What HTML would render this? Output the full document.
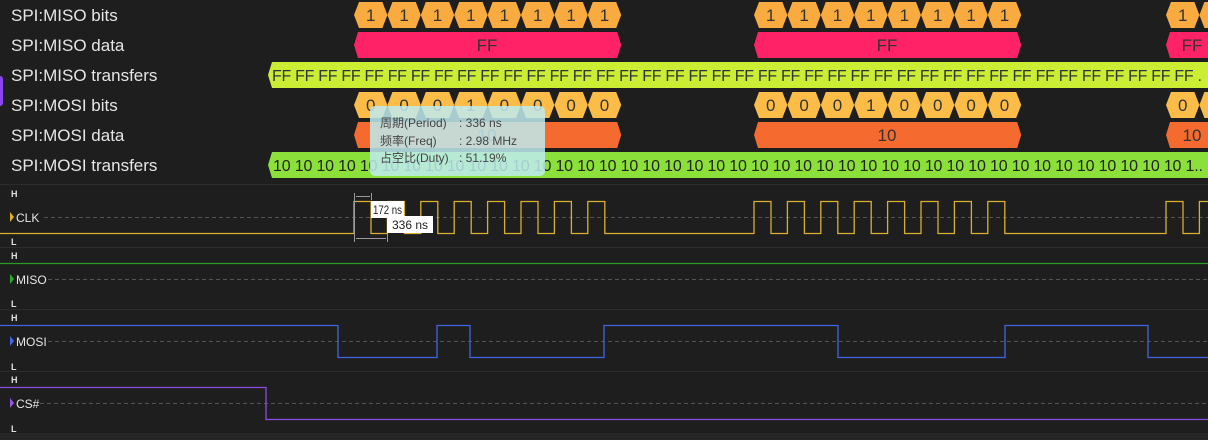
<!DOCTYPE html>
<html><head><meta charset="utf-8"><style>
html,body{margin:0;padding:0;background:#1e1e1e;width:1208px;height:440px;overflow:hidden}
svg{display:block;font-family:"Liberation Sans","Noto Sans CJK SC",sans-serif}
.lb{fill:#e6e6e6;font-size:17px}
.bt{fill:#333;font-size:17px;text-anchor:middle}
.hl{fill:#e0e0e0;font-size:9px;font-weight:bold}
.sn{fill:#e6e6e6;font-size:12px}
.tt{fill:#444;font-size:12px}
</style></head><body>
<svg id="s" width="1208" height="440" xmlns="http://www.w3.org/2000/svg">
<rect x="0" y="433" width="1208" height="7" fill="#262626"/>
<rect x="-3" y="76" width="6" height="30" rx="3" fill="#8a45f0"/>
<g id="shapes"></g>
<line x1="0" y1="184.5" x2="1208" y2="184.5" stroke="#2c2c2c"/>
<line x1="0" y1="247.5" x2="1208" y2="247.5" stroke="#2c2c2c"/>
<line x1="0" y1="309.5" x2="1208" y2="309.5" stroke="#2c2c2c"/>
<line x1="0" y1="371.5" x2="1208" y2="371.5" stroke="#2c2c2c"/>
<g stroke="#555" stroke-dasharray="4,3">
<line x1="44" y1="217.5" x2="1208" y2="217.5"/><line x1="48" y1="279.5" x2="1208" y2="279.5"/>
<line x1="48" y1="341.5" x2="1208" y2="341.5"/><line x1="40" y1="403.5" x2="1208" y2="403.5"/>
</g>
<g id="waves" fill="none" stroke-width="1.3"></g>
<text class="lb" x="11" y="21">SPI:MISO bits</text>
<text class="lb" x="11" y="51">SPI:MISO data</text>
<text class="lb" x="11" y="81">SPI:MISO transfers</text>
<text class="lb" x="11" y="111">SPI:MOSI bits</text>
<text class="lb" x="11" y="141">SPI:MOSI data</text>
<text class="lb" x="11" y="171">SPI:MOSI transfers</text>
<g class="bt">
<text x="370.7" y="21">1</text><text x="404.1" y="21">1</text><text x="437.5" y="21">1</text><text x="470.9" y="21">1</text><text x="504.3" y="21">1</text><text x="537.7" y="21">1</text><text x="571.1" y="21">1</text><text x="604.5" y="21">1</text>
<text x="770.7" y="21">1</text><text x="804.1" y="21">1</text><text x="837.5" y="21">1</text><text x="870.9" y="21">1</text><text x="904.3" y="21">1</text><text x="937.7" y="21">1</text><text x="971.1" y="21">1</text><text x="1004.5" y="21">1</text>
<text x="1182.7" y="21">1</text>
<text x="487" y="51">FF</text><text x="887" y="51">FF</text><text x="1192" y="51">FF</text>
<text x="370.7" y="111">0</text><text x="404.1" y="111">0</text><text x="437.5" y="111">0</text><text x="470.9" y="111">1</text><text x="504.3" y="111">0</text><text x="537.7" y="111">0</text><text x="571.1" y="111">0</text><text x="604.5" y="111">0</text>
<text x="770.7" y="111">0</text><text x="804.1" y="111">0</text><text x="837.5" y="111">0</text><text x="870.9" y="111">1</text><text x="904.3" y="111">0</text><text x="937.7" y="111">0</text><text x="971.1" y="111">0</text><text x="1004.5" y="111">0</text>
<text x="1182.7" y="111">0</text>
<text x="487" y="141">10</text><text x="887" y="141">10</text><text x="1192" y="141">10</text>
</g>
<text x="272" y="81" font-size="16" fill="#333" textLength="930" lengthAdjust="spacing">FF FF FF FF FF FF FF FF FF FF FF FF FF FF FF FF FF FF FF FF FF FF FF FF FF FF FF FF FF FF FF FF FF FF FF FF FF FF FF FF .</text>
<text x="273" y="171" font-size="16" fill="#222" textLength="930" lengthAdjust="spacing">10 10 10 10 10 10 10 10 10 10 10 10 10 10 10 10 10 10 10 10 10 10 10 10 10 10 10 10 10 10 10 10 10 10 10 10 10 10 10 10 10 10 1..</text>
<text class="hl" x="11" y="197">H</text><text class="hl" x="11" y="245">L</text>
<text class="hl" x="11" y="259">H</text><text class="hl" x="11" y="307">L</text>
<text class="hl" x="11" y="321">H</text><text class="hl" x="11" y="370">L</text>
<text class="hl" x="11" y="383">H</text><text class="hl" x="11" y="432">L</text>
<polygon points="10,212 14,217 10,222" fill="#e0b020"/><text class="sn" x="16" y="222">CLK</text>
<polygon points="10,274 14,279 10,284" fill="#2eaa2e"/><text class="sn" x="16" y="284">MISO</text>
<polygon points="10,336 14,341 10,346" fill="#4466ee"/><text class="sn" x="16" y="346">MOSI</text>
<polygon points="10,398 14,403 10,408" fill="#9955ee"/><text class="sn" x="16" y="408">CS#</text>
<g stroke="#999" stroke-width="1">
<line x1="354.5" y1="193" x2="354.5" y2="242"/><line x1="371.5" y1="193" x2="371.5" y2="200"/><line x1="387.5" y1="234" x2="387.5" y2="242"/>
<line x1="356" y1="196.5" x2="370" y2="196.5"/><line x1="356" y1="238.5" x2="386" y2="238.5"/>
</g>
<rect x="371" y="201" width="33" height="17" fill="#fff"/><text x="373" y="214" font-size="12" fill="#222" textLength="29" lengthAdjust="spacingAndGlyphs">172 ns</text>
<rect x="387" y="216" width="46" height="17" fill="#fff"/><text x="392" y="229" font-size="12" fill="#222">336 ns</text>
<rect x="370" y="106" width="175" height="70" rx="5" fill="rgba(190,235,240,0.85)"/>
<g class="tt"><text x="380" y="127">周期(Period)</text><text x="459" y="127">: 336 ns</text>
<text x="380" y="145">频率(Freq)</text><text x="459" y="145">: 2.98 MHz</text>
<text x="380" y="162">占空比(Duty)</text><text x="459" y="162">: 51.19%</text></g>
</svg>
<script>
var ns="http://www.w3.org/2000/svg",S=document.getElementById("shapes"),W=document.getElementById("waves");
function poly(pts,f){var p=document.createElementNS(ns,"polygon");p.setAttribute("points",pts.map(a=>a.join(",")).join(" "));p.setAttribute("fill",f);S.insertBefore(p,S.firstChild);}
function hex(x0,x1,t,b,f,i){var c=(t+b)/2;i=i||5;poly([[x0,c],[x0+i,t],[x1-i,t],[x1,c],[x1-i,b],[x0+i,b]],f);}
var G=[354,754,1166],w=33.4;
G.forEach(function(s){for(var k=0;k<8;k++){hex(s+k*w,s+(k+1)*w,2,28,"#f9ab3f");hex(s+k*w,s+(k+1)*w,92,118,"#fbbd48");}
hex(s,s+8*w,32,58,"#ff2266",4);hex(s,s+8*w,122,148,"#f56a2e",4);});
hex(268,1260,62,88,"#cbee35",4);hex(268,1260,152,178,"#8be03a",4);
function path(d,c){var p=document.createElementNS(ns,"path");p.setAttribute("d",d);p.setAttribute("stroke",c);W.appendChild(p);}
var hi=201.5,lo=233.5,d="M0 "+lo;
G.forEach(function(s){for(var k=0;k<8;k++){var x=s+k*w;d+=" H"+x+" V"+hi+" H"+(x+17)+" V"+lo;}});d+=" H1208";
path(d,"#d8b030");
path("M0 263.5 H1208","#2a9a2a");
path("M0 325.5 H338 V357.5 H437 V325.5 H470 V357.5 H604 V325.5 H838 V357.5 H871 V357.5 H1005 V325.5 H1148 V357.5 H1208","#3f66e0");
path("M0 387.5 H266 V419.5 H1208","#8a4fe0");
</script>
</body></html>
